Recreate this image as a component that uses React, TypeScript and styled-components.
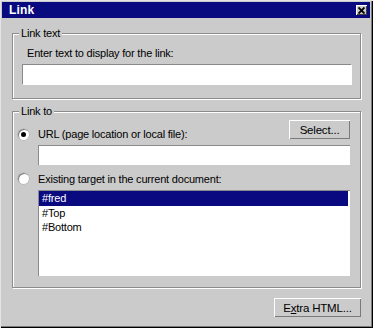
import React from 'react'
import styled, { createGlobalStyle } from 'styled-components'

const GlobalStyle = createGlobalStyle`
  html, body {
    margin: 0;
    background: #fff;
  }
  body {
    font-family: 'Liberation Sans', Arial, sans-serif;
    font-size: 11px;
    letter-spacing: -0.2px;
    color: #000;
  }
`

const Window = styled.div`
  width: 373px;
  height: 328px;
  box-sizing: border-box;
  background: #cbcbcb;
  padding: 2px 3px 2px 2px;
  display: flex;
  flex-direction: column;
  box-shadow: inset 1px 1px #e4e4e4, inset -1px -1px #000, inset -2px -2px #7c7c7c;
`

const TitleBar = styled.div`
  height: 16px;
  background: #0a0a80;
  display: flex;
  align-items: center;
  justify-content: space-between;
  padding: 0 3px 0 7px;
  flex-shrink: 0;
`

const Title = styled.span`
  color: #fff;
  font-weight: bold;
  font-size: 12px;
  letter-spacing: 0.2px;
`

const CloseButton = styled.div`
  width: 11px;
  height: 10px;
  background: #cbcbcb;
  display: flex;
  align-items: center;
  justify-content: center;
  box-shadow: inset 1px 1px #fff, inset -1px -1px #404040;
`

const Body = styled.div`
  flex: 1;
  display: flex;
  flex-direction: column;
  padding: 15px 9px 0 10px;
`

const Group = styled.div<{ $height: number }>`
  position: relative;
  height: ${(p) => p.$height}px;
  border: 1px solid #8c8c8c;
  box-shadow: inset 1px 1px #fff, 1px 1px #fff;
  margin-bottom: 12px;
  box-sizing: border-box;
`

const Legend = styled.span`
  position: absolute;
  top: -7px;
  left: 6px;
  padding: 0 2px;
  background: #cbcbcb;
  line-height: 13px;
`

const LinkTextBody = styled.div`
  display: flex;
  flex-direction: column;
  padding: 12px 10px 0 9px;
`

const Label = styled.div<{ $indent?: number; $drop?: number }>`
  padding-left: ${(p) => p.$indent ?? 0}px;
  margin-bottom: ${(p) => -(p.$drop ?? 0)}px;
  line-height: 14px;
  height: 14px;
`

const TextInput = styled.div<{ $width: number }>`
  width: ${(p) => p.$width}px;
  height: 20px;
  background: #fff;
  box-shadow: inset 1px 1px #8a8a8a, 1px 1px #fff;
  margin-top: 4px;
`

const LinkToBody = styled.div`
  display: grid;
  grid-template-columns: 25px 1fr;
  padding: 8px 10px 0 0;
`

const OptionRow = styled.div`
  grid-column: 1 / 3;
  display: grid;
  grid-template-columns: 25px 1fr auto;
  align-items: end;
`

const Radio = styled.span<{ $checked?: boolean; $drop?: number }>`
  width: 11px;
  height: 11px;
  border-radius: 50%;
  margin-left: 5px;
  margin-bottom: ${(p) => -(p.$drop ?? 0)}px;
  background: #fff;
  box-shadow: inset 1px 1px #808080, 0 0 0 0.5px #a9a9a9;
  display: flex;
  align-items: center;
  justify-content: center;
  &::after {
    content: '';
    display: ${(p) => (p.$checked ? 'block' : 'none')};
    width: 5px;
    height: 5px;
    border-radius: 50%;
    background: #000;
  }
`

const Button = styled.div<{ $width: number }>`
  width: ${(p) => p.$width}px;
  height: 19px;
  box-sizing: border-box;
  display: flex;
  align-items: center;
  justify-content: center;
  background: #cbcbcb;
  box-shadow: inset 1px 1px #fff, inset -1px -1px #7a7a7a;
  font-size: 11.5px;
`

const Field = styled.div`
  grid-column: 2;
  height: 20px;
  background: #fff;
  box-shadow: inset 1px 1px #8a8a8a;
  margin-top: 6px;
  margin-bottom: 7px;
`

const List = styled.div`
  grid-column: 2;
  height: 86px;
  margin-top: 4px;
  background: #fff;
  box-shadow: inset 1px 1px #8a8a8a;
  padding: 1px 2px 0 1px;
  box-sizing: border-box;
`

const ListItem = styled.div<{ $selected?: boolean }>`
  height: 14.5px;
  line-height: 14.5px;
  padding-left: 3px;
  background: ${(p) => (p.$selected ? '#0a0a80' : 'transparent')};
  color: ${(p) => (p.$selected ? '#fff' : '#000')};
`

const Footer = styled.div`
  display: flex;
  justify-content: flex-end;
  margin-top: -2px;
`

export default function App() {
  return (
    <>
      <GlobalStyle />
      <Window>
        <TitleBar>
          <Title>Link</Title>
          <CloseButton>
            <svg width="7" height="7" viewBox="0 0 7 7">
              <path d="M0.5 0.5 L6.5 6.5 M6.5 0.5 L0.5 6.5" stroke="#000" strokeWidth="1.9" />
            </svg>
          </CloseButton>
        </TitleBar>
        <Body>
          <Group $height={66}>
            <Legend>Link text</Legend>
            <LinkTextBody>
              <Label $indent={5}>Enter text to display for the link:</Label>
              <TextInput $width={329} />
            </LinkTextBody>
          </Group>
          <Group $height={177}>
            <Legend>Link to</Legend>
            <LinkToBody>
              <OptionRow>
                <Radio $checked $drop={1} />
                <Label $drop={2}>URL (page location or local file):</Label>
                <Button $width={61}>Select...</Button>
              </OptionRow>
              <Field />
              <OptionRow>
                <Radio $drop={-2} />
                <Label>Existing target in the current document:</Label>
              </OptionRow>
              <List>
                <ListItem $selected>#fred</ListItem>
                <ListItem>#Top</ListItem>
                <ListItem>#Bottom</ListItem>
              </List>
            </LinkToBody>
          </Group>
          <Footer>
            <Button $width={87}>
              <span>
                E<u>x</u>tra HTML...
              </span>
            </Button>
          </Footer>
        </Body>
      </Window>
    </>
  )
}
